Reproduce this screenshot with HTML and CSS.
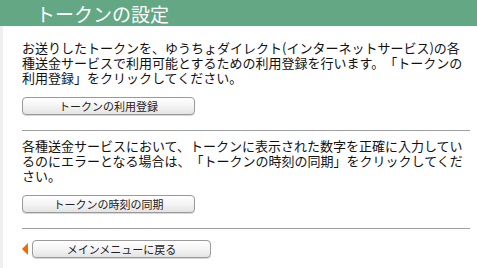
FILE: index.html
```html
<!DOCTYPE html>
<html lang="ja">
<head>
<meta charset="utf-8">
<title>トークンの設定</title>
<link rel="stylesheet" href="styles.css">
</head>
<body>
<header class="title-bar">
  <h1 class="title">トークンの設定</h1>
</header>
<main class="content">
  <section class="block first">
    <p class="desc">お送りしたトークンを、ゆうちょダイレクト(インターネットサービス)の各種送金サービスで利用可能とするための利用登録を行います。「トークンの利用登録」をクリックしてください。</p>
    <button class="btn" type="button">トークンの利用登録</button>
  </section>
  <hr class="rule">
  <section class="block">
    <p class="desc">各種送金サービスにおいて、トークンに表示された数字を正確に入力しているのにエラーとなる場合は、「トークンの時刻の同期」をクリックしてください。</p>
    <button class="btn" type="button">トークンの時刻の同期</button>
  </section>
  <hr class="rule rule2">
  <nav class="back">
    <span class="arrow"></span>
    <button class="btn btn-back" type="button">メインメニューに戻る</button>
  </nav>
</main>
</body>
</html>
```

FILE: styles.css
```css
html, body {
  margin: 0;
  padding: 0;
  background: #ffffff;
}
body {
  font-family: "Noto Sans CJK JP", "Noto Sans", sans-serif;
  color: #111111;
  width: 477px;
  height: 268px;
  overflow: hidden;
  text-spacing-trim: space-all;
}
.title-bar {
  height: 26px;
  box-sizing: border-box;
  padding-top: 1px;
  background: #64a785;
}
.title {
  margin: 0;
  padding-left: 36px;
  font-size: 19px;
  font-weight: normal;
  line-height: 25px;
  color: #ffffff;
}
.content {
  border-left: 3px solid #efefef;
  padding: 0 7px 0 19px;
  min-height: 242px;
  box-sizing: border-box;
}
.block {
  display: flex;
  flex-direction: column;
  align-items: flex-start;
  padding-top: 7px;
}
.block.first {
  padding-top: 14px;
}
.desc {
  margin: 0;
  font-size: 13px;
  line-height: 15px;
  text-spacing-trim: space-all;
}
.btn {
  margin-top: 12px;
  width: 173px;
  height: 18px;
  padding: 0;
  border: 1px solid #9a9a9a;
  border-radius: 4px;
  background: linear-gradient(#ffffff, #f4f4f4 50%, #e4e4e4);
  box-shadow: 0 1px 0 #d8d8d8;
  font-family: inherit;
  font-size: 11px;
  line-height: 16px;
  color: #222222;
  text-align: center;
}
.rule {
  border: 0;
  border-top: 1px solid #a0a0a0;
  margin: 15px 0 0 0;
  height: 0;
}
.rule2 {
  margin-top: 15px;
}
.back {
  display: flex;
  align-items: center;
  gap: 4px;
  padding-top: 11px;
}
.arrow {
  width: 0;
  height: 0;
  border-top: 6.5px solid transparent;
  border-bottom: 6.5px solid transparent;
  border-right: 6px solid #f06a00;
}
.btn-back {
  margin-top: 0;
  width: 179px;
}
```
